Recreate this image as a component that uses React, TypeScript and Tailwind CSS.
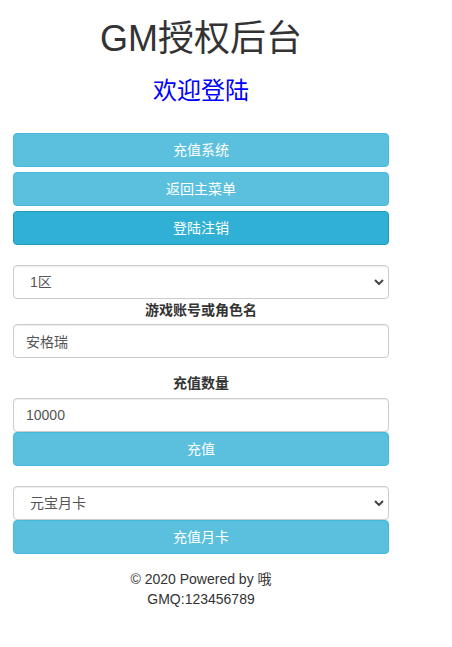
import { useState } from "react";

const infoBtn =
  "block h-[34px] w-full rounded-[4px] border border-[#46b8da] bg-[#5bc0de] text-center text-[14px] leading-[20px] text-white";

const inputCls =
  "block h-[34px] w-full rounded-[4px] border border-[#ccc] bg-white px-[12px] text-[14px] text-[#555] shadow-[inset_0_1px_1px_rgba(0,0,0,0.075)] outline-none";

function Chevron() {
  return (
    <svg
      viewBox="0 0 10 6"
      className="pointer-events-none absolute right-[5px] top-[14px] h-[6px] w-[10px]"
    >
      <path d="M1 1 L5 5 L9 1" fill="none" stroke="#444" strokeWidth="2" />
    </svg>
  );
}

function Select({ options }: { options: string[] }) {
  const [value, setValue] = useState(options[0]);
  return (
    <div className="relative">
      <select
        value={value}
        onChange={(e) => setValue(e.target.value)}
        className={`${inputCls} appearance-none pl-[16px]`}
      >
        {options.map((o) => (
          <option key={o}>{o}</option>
        ))}
      </select>
      <Chevron />
    </div>
  );
}

export default function App() {
  const [account, setAccount] = useState("安格瑞");
  const [amount, setAmount] = useState("10000");

  return (
    <div className="min-h-[647px] bg-white font-[Liberation_Sans,Noto_Sans_CJK_SC,sans-serif] text-[14px] leading-[20px] text-[#333]">
      <div className="ml-[13px] w-[376px] pt-[19px]">
        {/* Header */}
        <h1 className="text-center text-[36px] leading-[1.1] font-normal">GM授权后台</h1>
        <h3 className="mt-[19px] text-center text-[24px] leading-[1.1] font-normal text-[#0000ff]">
          欢迎登陆
        </h3>

        {/* Menu */}
        <div className="mt-[29px] flex flex-col gap-[5px]">
          <button className={infoBtn}>充值系统</button>
          <button className={infoBtn}>返回主菜单</button>
          <button className="block h-[34px] w-full rounded-[4px] border border-[#269abc] bg-[#31b0d5] text-center text-[14px] leading-[20px] text-white">
            登陆注销
          </button>
        </div>

        {/* Recharge form */}
        <div className="mt-[20px]">
          <Select options={["1区", "2区", "3区"]} />
          <label className="mt-[1px] mb-[4px] block text-center font-bold">游戏账号或角色名</label>
          <input
            className={inputCls}
            value={account}
            onChange={(e) => setAccount(e.target.value)}
          />
          <label className="mt-[15px] mb-[5px] block text-center font-bold">充值数量</label>
          <input
            className={inputCls}
            value={amount}
            onChange={(e) => setAmount(e.target.value)}
          />
          <button className={infoBtn}>充值</button>
        </div>

        {/* Month card */}
        <div className="mt-[20px]">
          <Select options={["元宝月卡", "至尊月卡"]} />
          <button className={infoBtn}>充值月卡</button>
        </div>

        {/* Footer */}
        <footer className="mt-[15px] text-center">
          <p>© 2020 Powered by 哦</p>
          <p>GMQ:123456789</p>
        </footer>
      </div>
    </div>
  );
}
